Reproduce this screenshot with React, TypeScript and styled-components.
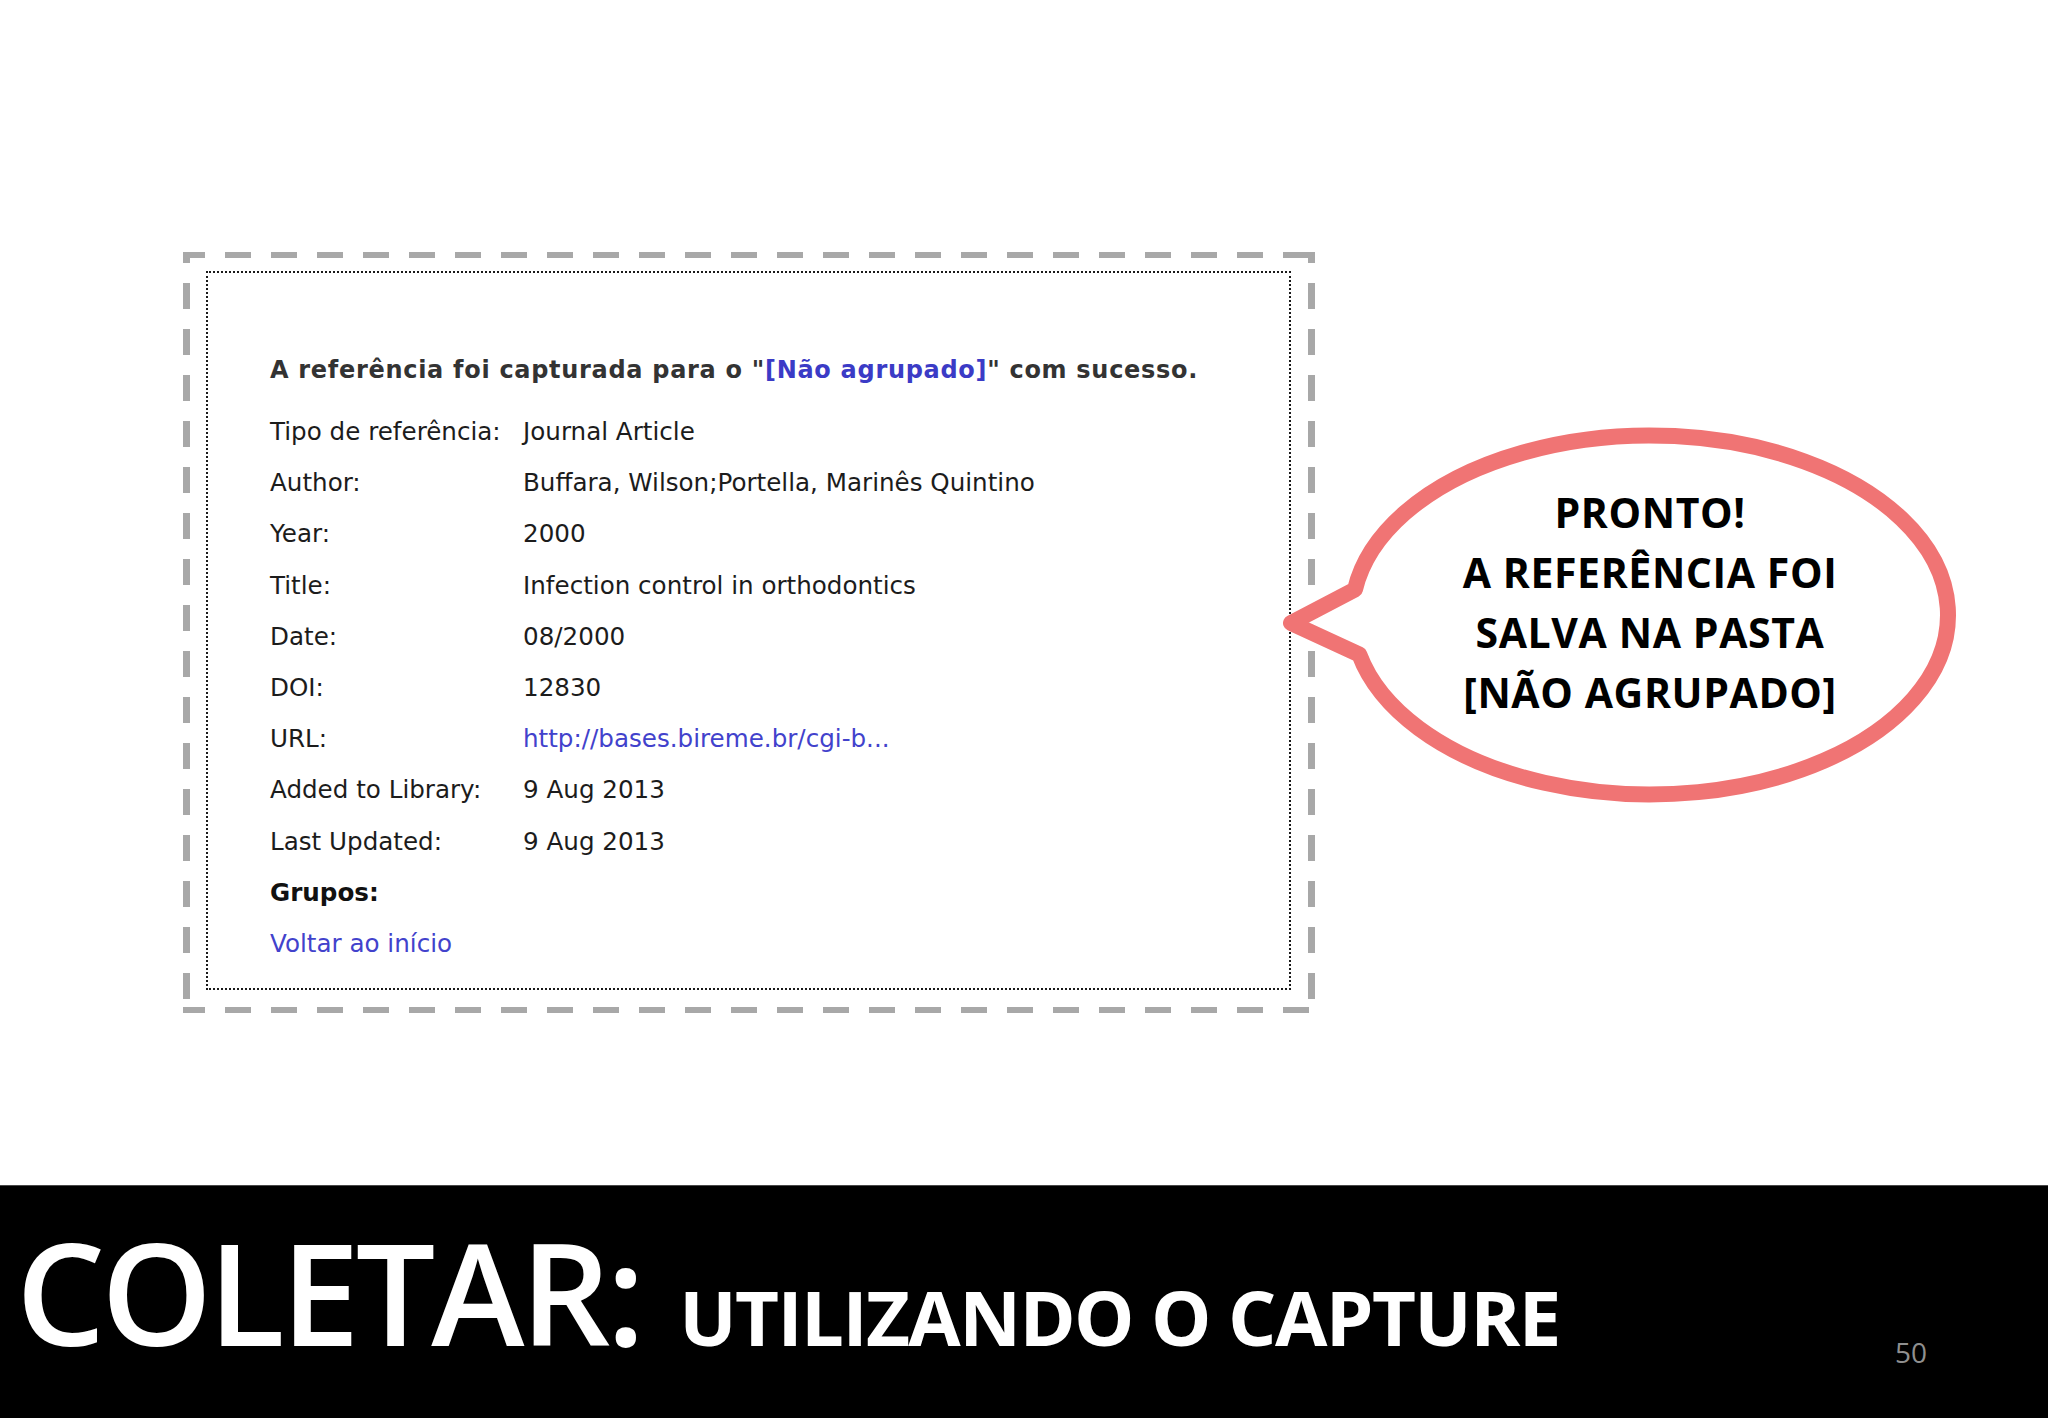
import styled, { createGlobalStyle } from 'styled-components';

interface Field {
   label: string;
   value: string;
   link?: boolean;
}

const fields: Field[] = [
   { label: 'Tipo de referência:', value: 'Journal Article' },
   { label: 'Author:', value: 'Buffara, Wilson;Portella, Marinês Quintino' },
   { label: 'Year:', value: '2000' },
   { label: 'Title:', value: 'Infection control in orthodontics' },
   { label: 'Date:', value: '08/2000' },
   { label: 'DOI:', value: '12830' },
   { label: 'URL:', value: 'http://bases.bireme.br/cgi-b...', link: true },
   { label: 'Added to Library:', value: '9 Aug 2013' },
   { label: 'Last Updated:', value: '9 Aug 2013' },
];

const calloutLines = ['PRONTO!', 'A REFERÊNCIA FOI', 'SALVA NA PASTA', '[NÃO AGRUPADO]'];

const App = () => {
   return (
      <>
         <GlobalStyle />
         <SlideStyle>
            <StageStyle>
               {/* captura */}
               <FrameStyle>
                  <CaptureStyle>
                     <HeadlineStyle>
                        A referência foi capturada para o "<LinkStyle $bold>[Não agrupado]</LinkStyle>" com sucesso.
                     </HeadlineStyle>
                     <FieldGridStyle>
                        {fields.map((f) => (
                           <FieldRow key={f.label}>
                              <span>{f.label}</span>
                              {f.link ? <LinkStyle>{f.value}</LinkStyle> : <span>{f.value}</span>}
                           </FieldRow>
                        ))}
                        <FieldRow>
                           <strong>Grupos:</strong>
                        </FieldRow>
                        <FieldRow>
                           <LinkStyle>Voltar ao início</LinkStyle>
                        </FieldRow>
                     </FieldGridStyle>
                  </CaptureStyle>
               </FrameStyle>
               {/* balão */}
               <CalloutStyle>
                  <svg width="760" height="400" viewBox="0 0 760 400">
                     <path
                        d="M 85 169.5 A 298 179.5 0 1 1 89.3 234.5 L 21 203 Z"
                        fill="#fff"
                        stroke="#f07474"
                        strokeWidth="16"
                        strokeLinejoin="round"
                     />
                  </svg>
                  <CalloutTextStyle>
                     {calloutLines.map((line) => (
                        <div key={line}>{line}</div>
                     ))}
                  </CalloutTextStyle>
               </CalloutStyle>
            </StageStyle>
            {/* rodapé */}
            <FooterStyle>
               <HeadingStyle>
                  <HeadingMain>COLETAR:</HeadingMain>
                  <HeadingSub>UTILIZANDO O CAPTURE</HeadingSub>
               </HeadingStyle>
               <PageNumberStyle>50</PageNumberStyle>
            </FooterStyle>
         </SlideStyle>
      </>
   );
};

const GlobalStyle = createGlobalStyle`
   html, body {
      margin: 0;
      padding: 0;
      background: #fff;
      overflow: hidden;
   }
`;

const SlideStyle = styled.div`
   width: 2048px;
   height: 1418px;
   display: flex;
   flex-direction: column;
   background: #fff;
`;

const StageStyle = styled.div`
   position: relative;
   height: 1185px;
   box-sizing: border-box;
   padding: 252px 0 0 183px;
`;

const dashH = 'linear-gradient(to right, #a8a8a8 26px, transparent 26px)';
const dashV = 'linear-gradient(to bottom, #a8a8a8 26px, transparent 26px)';

const FrameStyle = styled.div`
   width: 1132px;
   height: 761px;
   box-sizing: border-box;
   padding: 19px 24px 23px 23px;
   background:
      ${dashH} -4px 0 / 46px 6px repeat-x,
      ${dashH} -4px 100% / 46px 6px repeat-x,
      ${dashV} 0 -15px / 7px 46px repeat-y,
      ${dashV} 100% -15px / 7px 46px repeat-y;
`;

const CaptureStyle = styled.div`
   height: 100%;
   box-sizing: border-box;
   border: 2px dotted #1a1a1a;
   background: #fff;
   padding: 82px 0 0 62px;
   font-family: 'DejaVu Sans', Verdana, sans-serif;
   color: #1c1c1c;
`;

const HeadlineStyle = styled.div`
   font-size: 24px;
   line-height: 30px;
   font-weight: 700;
   letter-spacing: 0.7px;
   color: #333;
   margin-bottom: 21px;
   white-space: nowrap;
`;

interface LinkStyleProps {
   $bold?: boolean;
}

const LinkStyle = styled.span<LinkStyleProps>`
   color: ${({ $bold }) => ($bold ? '#3b3bc6' : '#4242cc')};
   font-weight: ${({ $bold }) => ($bold ? 700 : 400)};
`;

const FieldGridStyle = styled.div`
   display: flex;
   flex-direction: column;
`;

const FieldRow = styled.div`
   display: grid;
   grid-template-columns: 253px 1fr;
   font-size: 24.6px;
   line-height: 51.2px;
   white-space: nowrap;

   strong {
      font-weight: 700;
      color: #111;
   }
`;

const CalloutStyle = styled.div`
   position: absolute;
   left: 1270px;
   top: 420px;
   width: 760px;
   height: 400px;

   svg {
      position: absolute;
      inset: 0;
   }
`;

const CalloutTextStyle = styled.div`
   position: relative;
   padding-top: 62px;
   text-align: center;
   font-family: 'Open Sans', 'Noto Sans', sans-serif;
   font-weight: 700;
   font-size: 41px;
   line-height: 60px;
   letter-spacing: 0.6px;
   color: #000;
`;

const FooterStyle = styled.div`
   flex: 1;
   display: flex;
   align-items: flex-start;
   background: #000;
   border-top: 1px solid #484848;
   box-sizing: border-box;
   padding-left: 16px;
   font-family: 'Open Sans', 'Noto Sans', sans-serif;
`;

const HeadingStyle = styled.div`
   display: flex;
   align-items: baseline;
   gap: 38px;
   padding-top: 35px;
   color: #fff;
   white-space: nowrap;
`;

const HeadingMain = styled.span`
   font-size: 141px;
   line-height: 141px;
   font-weight: 600;
   letter-spacing: -4px;
`;

const HeadingSub = styled.span`
   font-size: 76px;
   line-height: 76px;
   font-weight: 700;
   letter-spacing: -1.6px;
`;

const PageNumberStyle = styled.div`
   margin-left: auto;
   margin-right: 121px;
   margin-top: 152px;
   font-size: 28px;
   line-height: 28px;
   color: #8f8f8f;
`;

export default App;
